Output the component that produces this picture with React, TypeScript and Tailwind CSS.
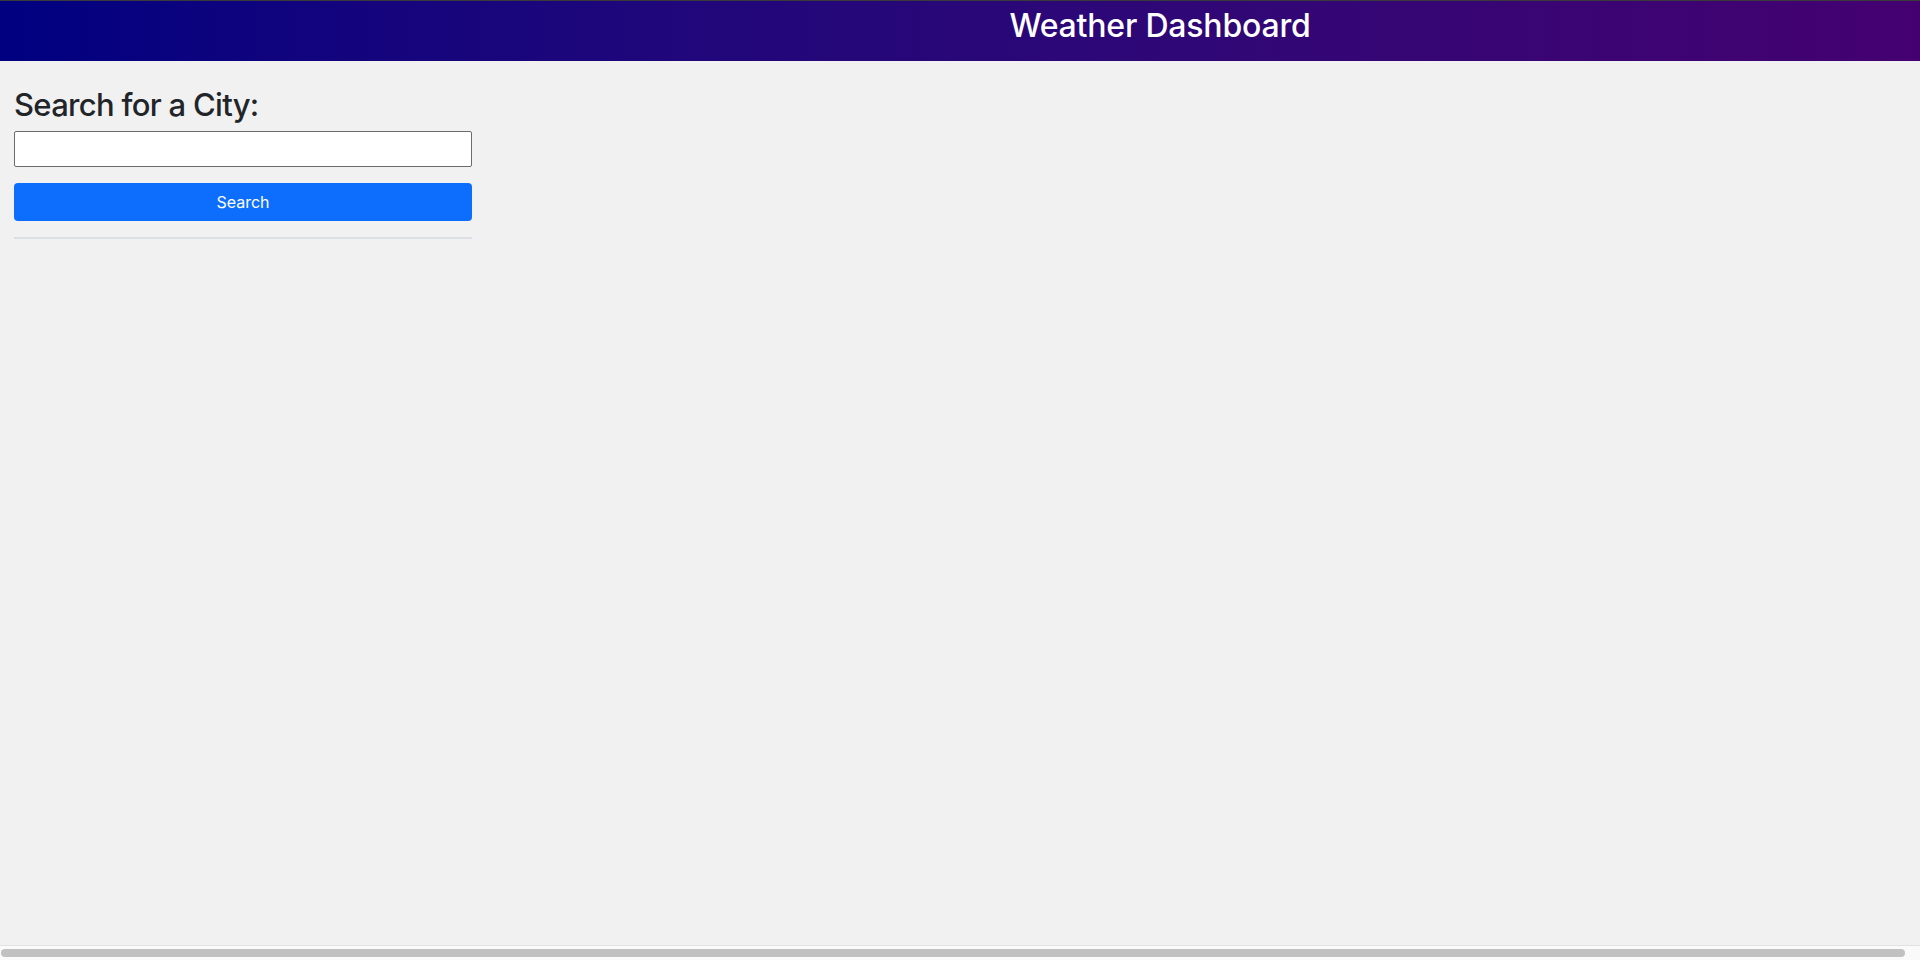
import React, { useState } from 'react';

export default function App() {
  const [city, setCity] = useState('');

  return (
    <div
      className="flex h-screen flex-col bg-[#f1f1f1] text-[#212529]"
      style={{ fontFamily: 'Inter, "Noto Sans", Roboto, sans-serif' }}
    >
      <header className="h-[61px] shrink-0 border-t border-[#3a3a3a] bg-gradient-to-r from-[#000080] to-[#440070]">
        <h1 className="pl-[400px] text-center text-[32px] font-medium leading-[49px] tracking-[-0.2px] text-white">
          Weather Dashboard
        </h1>
      </header>

      <main className="flex-1 px-[14px] pt-[25px]">
        <div className="w-[458px]">
          <h3 className="text-[31px] font-medium leading-[38px] tracking-[-0.7px]">Search for a City:</h3>
          <input
            type="text"
            value={city}
            onChange={(e) => setCity(e.target.value)}
            className="mt-[7px] block h-[36px] w-full rounded-[2px] border border-[#6b6b6b] bg-white px-2 text-base outline-none"
          />
          <button
            type="button"
            className="mt-4 block h-[38px] w-full rounded-[4px] bg-[#0d6efd] text-base text-white"
          >
            Search
          </button>
          <hr className="mt-4 h-[2px] border-0 bg-[#dcdfe3]" />
        </div>
      </main>

      <div className="flex h-[15px] shrink-0 items-center border-t border-[#e2e2e2] bg-[#fafafa] px-[1px]">
        <div className="h-[8px] w-[1904px] rounded-full bg-[#c1c1c1]" />
      </div>
    </div>
  );
}
